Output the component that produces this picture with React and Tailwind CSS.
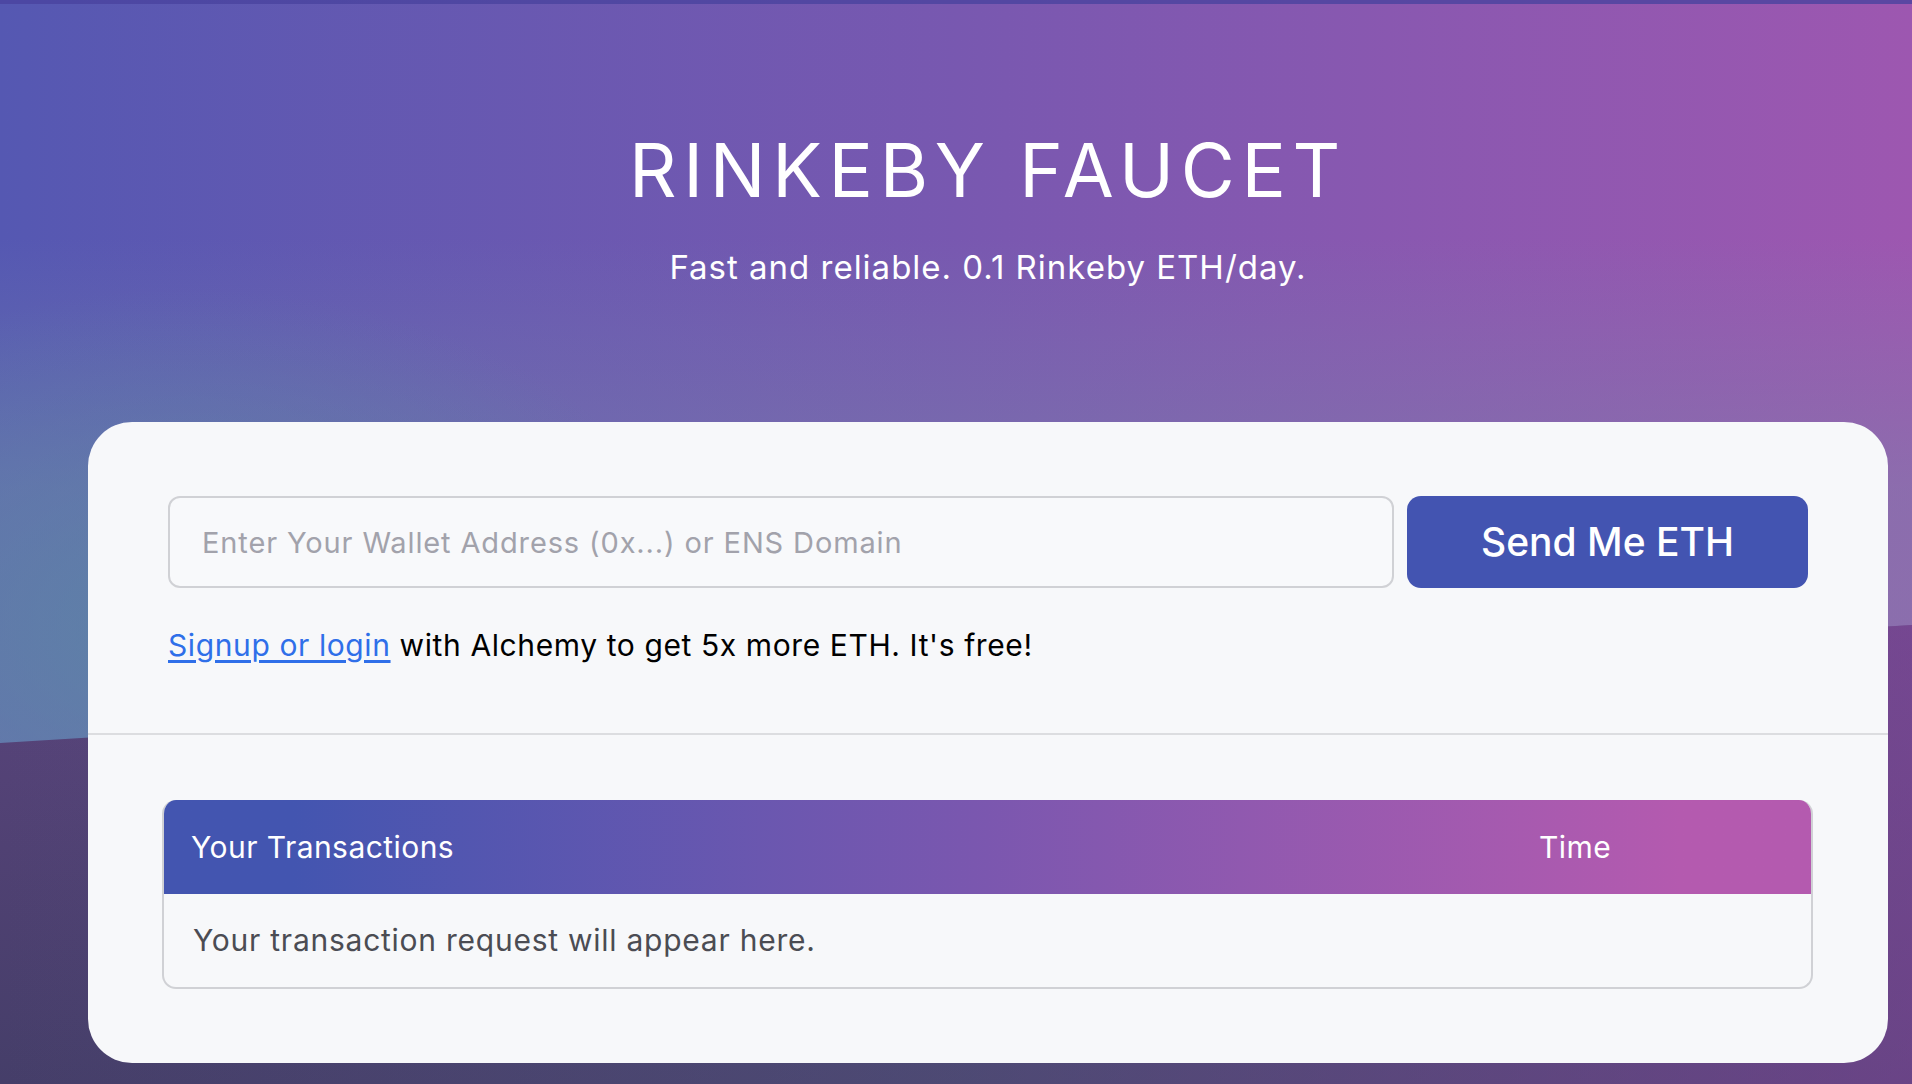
import React from "react";

export default function App() {
  return (
    <div
      className="relative h-[1084px] w-full overflow-hidden bg-gradient-to-r from-[#5558b2] via-[#7858b0] to-[#9d57b0]"
      style={{ fontFamily: "Inter, 'Noto Sans', sans-serif" }}
    >
      {/* Background haze + lower wave */}
      <div className="absolute inset-0 bg-[linear-gradient(180deg,transparent_22%,rgba(120,135,170,0.45)_45%,rgba(120,135,170,0.5)_65%)]"></div>
      <div className="absolute inset-0 bg-[radial-gradient(ellipse_520px_340px_at_10%_58%,rgba(90,135,165,0.8),transparent)]"></div>
      <div className="absolute inset-0 [clip-path:polygon(0_743px,100%_625px,100%_100%,0_100%)] bg-[linear-gradient(180deg,#7a4590_0%,#5e4580_50%,#453e69_100%)]"></div>
      <div className="absolute inset-0 [clip-path:polygon(0_743px,100%_625px,100%_100%,0_100%)] bg-[linear-gradient(90deg,transparent_0%,rgba(95,100,140,0.3)_50%,rgba(150,75,170,0.45)_100%)]"></div>

      <div className="relative z-10 flex flex-col">
        {/* Top strip */}
        <div className="h-1 bg-[#4a439f]/80"></div>

        {/* Header */}
        <div className="ml-[88px] mr-[24px] flex flex-col items-center text-white">
          <h1 className="mt-[129px] text-[74px] leading-[74px] font-normal tracking-[0.09em]">
            RINKEBY FAUCET
          </h1>
          <p className="mt-[44px] text-[33px] leading-[32px] tracking-[0.03em]">
            Fast and reliable. 0.1 Rinkeby ETH/day.
          </p>
        </div>

        {/* Card */}
        <div className="mt-[139px] ml-[88px] w-[1800px] h-[641px] rounded-[44px] bg-[#f7f8fa] flex flex-col">
          <div className="h-[313px] px-[80px] pt-[74px] border-b-2 border-[#dcdde0]">
            <div className="flex gap-[13px]">
              <input
                type="text"
                placeholder="Enter Your Wallet Address (0x...) or ENS Domain"
                className="w-[1226px] h-[92px] rounded-[12px] border-2 border-[#d0d1d5] bg-[#f8f9fb] pl-[32px] text-[29px] tracking-[0.03em] placeholder-[#a2a2ab] outline-none"
              />
              <button className="w-[401px] h-[92px] rounded-[14px] bg-[#4354b1] text-white text-[39px] font-medium">
                Send Me ETH
              </button>
            </div>
            <p className="mt-[42px] text-[30px] leading-[30px] tracking-[0.02em] text-black">
              <a href="#" className="text-[#2f6fe9] underline underline-offset-4">
                Signup or login
              </a>{" "}
              with Alchemy to get 5x more ETH. It's free!
            </p>
          </div>

          <div className="pt-[65px] pl-[74px] pr-[75px]">
            <div className="rounded-[14px] overflow-hidden border-2 border-t-0 border-[#d0d1d5]">
              <div className="h-[94px] -mx-[2px] flex items-center bg-gradient-to-r from-[#4355b0] from-[8%] via-[#7b57af] to-[#b45aaf] to-[92%] text-white text-[30px] tracking-[0.015em]">
                <div className="flex-1 pl-[29px]">Your Transactions</div>
                <div className="w-[274px]">Time</div>
              </div>
              <div className="h-[93px] flex items-center pl-[29px] text-[30px] tracking-[0.025em] text-[#4b4c53]">
                Your transaction request will appear here.
              </div>
            </div>
          </div>
        </div>
      </div>
    </div>
  );
}
